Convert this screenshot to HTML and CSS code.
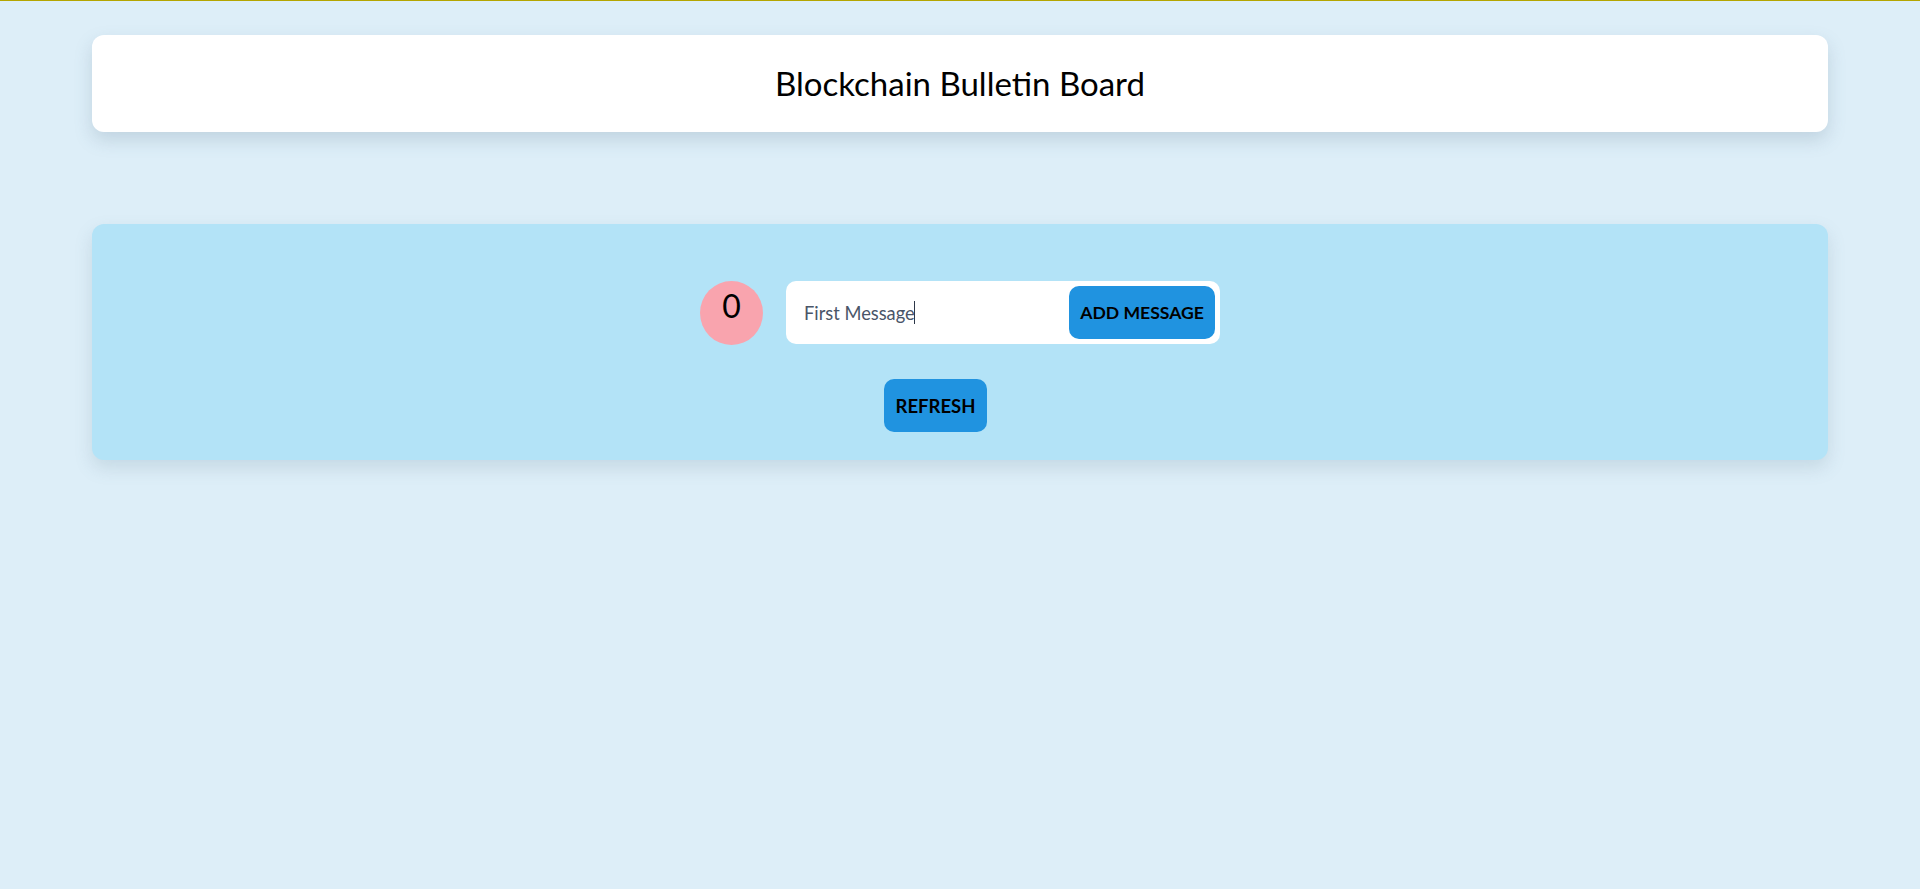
FILE: index.html
```html
<!DOCTYPE html>
<html lang="en">
<head>
<meta charset="utf-8">
<title>Blockchain Bulletin Board</title>
<link rel="stylesheet" href="styles.css">
</head>
<body>
  <div class="page">
    <header class="header-card">
      <h1 class="title">Blockchain Bulletin Board</h1>
    </header>
    <main class="board">
      <div class="compose-row">
        <div class="count-badge">0</div>
        <form class="message-form">
          <div class="message-field"><input class="message-input" type="text" value="First Message"><span class="caret"></span></div>
          <button type="button" class="btn">ADD MESSAGE</button>
        </form>
      </div>
      <div class="refresh-row">
        <button type="button" class="btn btn-refresh">REFRESH</button>
      </div>
    </main>
  </div>
</body>
</html>
```

FILE: styles.css
```css
html, body {
  margin: 0;
  padding: 0;
}

body {
  background: #ddeef8;
  border-top: 1px solid #b4a500;
  font-family: Lato, "Open Sans", sans-serif;
  color: #000;
  min-height: 888px;
}

.page {
  margin: 0 92px;
  padding-top: 34px;
}

.header-card {
  background: #ffffff;
  border-radius: 12px;
  height: 97px;
  display: flex;
  align-items: center;
  justify-content: center;
  box-shadow: 0 8px 18px rgba(90, 120, 140, 0.22);
}

.title {
  margin: 0;
  font-weight: 400;
  font-size: 33px;
  line-height: 1;
}

.board {
  margin-top: 92px;
  background: #b3e3f7;
  border-radius: 12px;
  padding: 57px 0 28px;
  box-shadow: 0 8px 18px rgba(90, 120, 140, 0.18);
}

.compose-row {
  display: flex;
  justify-content: center;
  align-items: flex-start;
  gap: 23px;
}

.count-badge {
  width: 63px;
  height: 64px;
  box-sizing: border-box;
  border-radius: 50%;
  background: #f9a4ae;
  display: flex;
  justify-content: center;
  align-items: flex-start;
  padding-top: 6px;
  font-size: 32px;
  line-height: 1.2;
}

.message-form {
  margin: 0;
  width: 434px;
  height: 63px;
  box-sizing: border-box;
  background: #ffffff;
  border-radius: 10px;
  padding: 5px;
  display: flex;
  align-items: stretch;
}

.message-field {
  flex: 1;
  display: flex;
  align-items: center;
  padding-left: 13px;
  position: relative;
}

.message-input {
  border: none;
  outline: none;
  background: transparent;
  font-family: Lato, "Open Sans", sans-serif;
  font-size: 18.3px;
  color: #4a5568;
  padding: 0;
  width: 100%;
  height: 100%;
}

.caret {
  position: absolute;
  left: 123px;
  top: 15px;
  width: 1px;
  height: 23px;
  background: #2d3748;
}

.btn {
  border: none;
  background: #2093e0;
  color: #000;
  border-radius: 10px;
  height: 53px;
  padding: 0 11px;
  font-family: Lato, "Open Sans", sans-serif;
  font-weight: 700;
  font-size: 17.6px;
  cursor: pointer;
}

.btn-refresh {
  padding: 0 12px;
  font-size: 18.5px;
}

.refresh-row {
  display: flex;
  justify-content: center;
  padding-right: 49px;
  margin-top: 34px;
}
```
